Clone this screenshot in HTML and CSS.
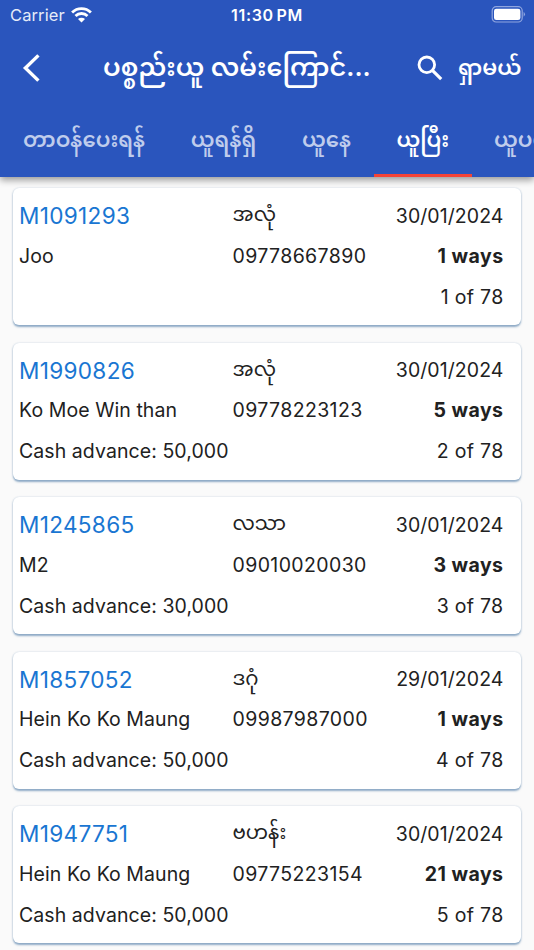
FILE: index.html
```html
<!DOCTYPE html>
<html lang="my">
<head>
<meta charset="utf-8">
<title>ပစ္စည်းယူ</title>
<link rel="stylesheet" href="styles.css">
</head>
<body>
<header class="header">
  <div class="status">
    <div class="carrier">Carrier
      <svg class="wifi" width="21" height="16" viewBox="0 0 21 16" fill="none" stroke="#fff" stroke-width="2.8"><path d="M1.1 5.4a13.4 13.4 0 0 1 18.8 0M4.5 9a8.5 8.5 0 0 1 12 0"/><path d="M10.5 15.6 7 12.1a5 5 0 0 1 7 0z" fill="#fff" stroke="none"/></svg>
    </div>
    <div class="clock">11:30 PM</div>
    <svg class="battery" width="35" height="17" viewBox="0 0 35 17"><rect x="1.2" y=".7" width="30" height="15.3" rx="4" fill="none" stroke="#90a6df" stroke-width="1.2"/><rect x="3" y="2.7" width="26.4" height="11.3" rx="2.3" fill="#fff"/><path d="M32.6 5.8q2.8 2.5 0 5z" fill="#90a6df"/></svg>
  </div>
  <div class="appbar">
    <svg class="back" width="18" height="28" viewBox="0 0 18 28" fill="none" stroke="#fff" stroke-width="3.4"><path d="M16.4 1.4 3.4 14l13 12.6"/></svg>
    <h1 class="title">ပစ္စည်းယူ လမ်းကြောင်...</h1>
    <svg class="search" width="26" height="26" viewBox="0 0 26 26" fill="none" stroke="#fff" stroke-width="2.8"><circle cx="9.8" cy="9.8" r="7.8"/><path d="m15.4 15.4 8.8 8.8" stroke-width="3.2"/></svg>
    <span class="find">ရှာမယ်</span>
  </div>
  <nav class="tabs">
    <span class="tab tab-a">တာဝန်ပေးရန်</span>
    <span class="tab tab-b">ယူရန်ရှိ</span>
    <span class="tab tab-c">ယူနေ</span>
    <span class="tab tab-d active">ယူပြီး</span>
    <span class="tab tab-e">ယူပယ်</span>
  </nav>
</header>
<main class="list">
  <article class="card">
    <span class="code">M1091293</span><span class="place">အလုံ</span><span class="end">30/01/2024</span>
    <span>Joo</span><span class="phone">09778667890</span><span class="end ways">1 ways</span>
    <span class="cash"></span><span class="end count">1 of 78</span>
  </article>
  <article class="card">
    <span class="code">M1990826</span><span class="place">အလုံ</span><span class="end">30/01/2024</span>
    <span>Ko Moe Win than</span><span class="phone">09778223123</span><span class="end ways">5 ways</span>
    <span class="cash">Cash advance: 50,000</span><span class="end count">2 of 78</span>
  </article>
  <article class="card">
    <span class="code">M1245865</span><span class="place">လသာ</span><span class="end">30/01/2024</span>
    <span>M2</span><span class="phone">09010020030</span><span class="end ways">3 ways</span>
    <span class="cash">Cash advance: 30,000</span><span class="end count">3 of 78</span>
  </article>
  <article class="card">
    <span class="code">M1857052</span><span class="place">ဒဂုံ</span><span class="end">29/01/2024</span>
    <span>Hein Ko Ko Maung</span><span class="phone">09987987000</span><span class="end ways">1 ways</span>
    <span class="cash">Cash advance: 50,000</span><span class="end count">4 of 78</span>
  </article>
  <article class="card">
    <span class="code">M1947751</span><span class="place">ဗဟန်း</span><span class="end">30/01/2024</span>
    <span>Hein Ko Ko Maung</span><span class="phone">09775223154</span><span class="end ways">21 ways</span>
    <span class="cash">Cash advance: 50,000</span><span class="end count">5 of 78</span>
  </article>
</main>
</body>
</html>
```
FILE: styles.css
```css
* { box-sizing: border-box; }
body {
  margin: 0;
  height: 950px;
  overflow: hidden;
  background: #fafafa;
  color: #212121;
  font-family: Inter, "Noto Sans Myanmar", "Noto Sans", sans-serif;
}
.header {
  position: relative;
  height: 177px;
  background: #2a55bd;
  color: #fff;
  box-shadow: 0 3px 7px rgba(0, 0, 0, .4);
}
.status {
  display: grid;
  grid-template-columns: 1fr auto 1fr;
  align-items: center;
  height: 30px;
  padding: 0 8px 0 10px;
  font-size: 16.5px;
}
.carrier { display: flex; align-items: center; gap: 6px; color: #e6ebf8; letter-spacing: .1px; }
.clock { margin-right: 2px; font-weight: 600; font-size: 16px; letter-spacing: .7px; word-spacing: -2px; }
.battery { justify-self: end; margin-top: -1px; }
.appbar {
  display: flex;
  align-items: center;
  height: 74px;
  padding-left: 22px;
  white-space: nowrap;
}
.back { flex: none; margin-top: 2px; }
.title {
  flex: none;
  width: 268px;
  margin: 5px 0 0 63px;
  font-size: 25.6px;
  font-weight: 600;
}
.search { flex: none; margin: 2px 15px 0 46px; }
.find { margin-top: 5px; font-size: 21.7px; font-weight: 600; }
.tabs {
  display: flex;
  height: 73px;
  overflow: hidden;
  white-space: nowrap;
}
.tab {
  flex: none;
  display: flex;
  align-items: center;
  justify-content: center;
  padding-top: 6px;
  border-bottom: 3px solid transparent;
  font-size: 21.3px;
  font-weight: 600;
  color: #bfccec;
}
.tab-a { width: 168px; }
.tab-b { width: 111px; }
.tab-c { width: 95px; }
.tab-d { width: 97.5px; }
.tab-e { width: 120px; justify-content: flex-start; padding-left: 22.5px; }
.active { color: #fff; border-bottom-color: #f44336; }
.list {
  display: flex;
  flex-direction: column;
  gap: 17.5px;
  padding: 11px 13px 0 12.5px;
}
.card {
  flex: none;
  display: grid;
  grid-template-columns: 213.5px 1fr auto;
  grid-template-rows: 39px 41px 41px;
  align-items: center;
  height: 137px;
  padding: 8px 17.5px 8px 6.5px;
  border-radius: 6px;
  background: #fff;
  box-shadow: 0 1.5px 2px rgba(42, 95, 150, .5), 0 0 2px rgba(42, 95, 150, .15);
  font-size: 19.5px;
  letter-spacing: .07px;
  white-space: nowrap;
}
.code { font-size: 22.6px; letter-spacing: .3px; color: #1976d2; }
.place { padding-top: 2px; font-size: 19.8px; letter-spacing: 0; }
.phone { letter-spacing: .38px; }
.end { justify-self: end; }
.ways { font-weight: 700; letter-spacing: .45px; }
.count { letter-spacing: .3px; }
.cash { grid-column: 1 / 3; }
```
